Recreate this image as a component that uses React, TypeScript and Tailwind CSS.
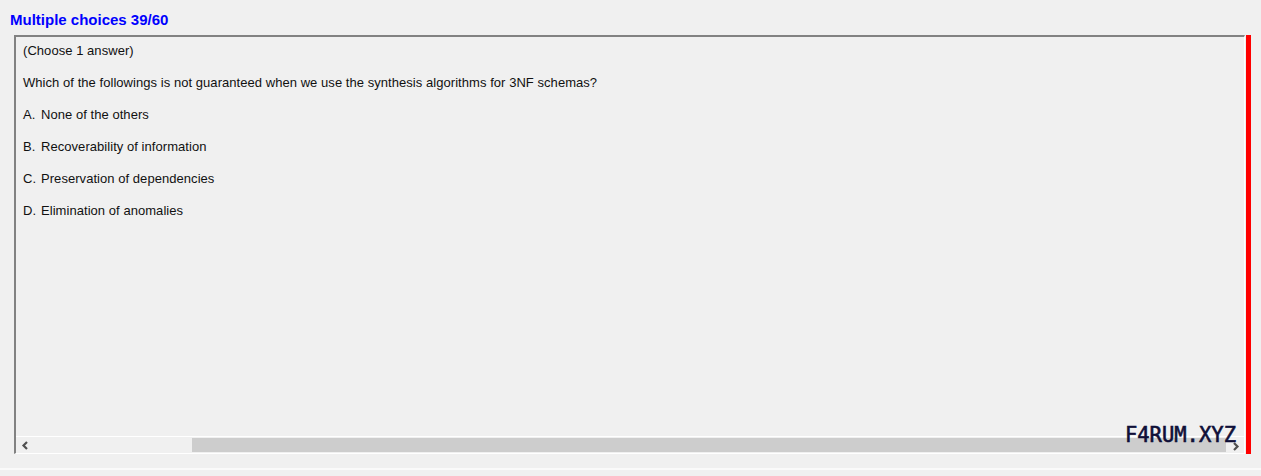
import React from 'react';

const options = [
    { key: 'A.', text: 'None of the others' },
    { key: 'B.', text: 'Recoverability of information' },
    { key: 'C.', text: 'Preservation of dependencies' },
    { key: 'D.', text: 'Elimination of anomalies' },
];

const Chevron = ({ dir }: { dir: 'left' | 'right' }) => (
    <svg width="8" height="9" viewBox="0 0 8 9" className="block">
        {dir === 'left' ? (
            <polyline points="6,1 2.5,4.5 6,8" fill="none" stroke="#505050" strokeWidth="2.2" />
        ) : (
            <polyline points="2,1 5.5,4.5 2,8" fill="none" stroke="#505050" strokeWidth="2.2" />
        )}
    </svg>
);

const App = () => {
    return (
        <div className="w-[1261px] h-[476px] bg-[#f0f0f0] overflow-hidden font-['Liberation_Sans',Arial,sans-serif] text-black">
            <div className="pl-[10px] pt-[11px] h-[35px]">
                <h1 className="text-[15px] leading-[18px] font-bold text-[#0000ff]">Multiple choices 39/60</h1>
            </div>

            <div className="flex pl-[14px] h-[419px]">
                {/* question panel */}
                <div className="relative flex flex-col w-[1231px] border-t-2 border-l-2 border-t-[#828282] border-l-[#828282] border-r border-b border-r-white border-b-white">
                    <div className="flex-1 flex flex-col gap-4 pl-[7px] pt-[6px] text-[13px] leading-[16px] tracking-[0.05px] text-[#111]">
                        <p>(Choose 1 answer)</p>
                        <p>Which of the followings is not guaranteed when we use the synthesis algorithms for 3NF schemas?</p>
                        {options.map((o) => (
                            <p key={o.key}>
                                <span className="inline-block w-[18px]">{o.key}</span>
                                {o.text}
                            </p>
                        ))}
                    </div>

                    {/* horizontal scrollbar */}
                    <div className="flex items-center h-[17px] border-t border-white bg-[#f0f0f0]">
                        <div className="w-[16px] flex justify-center pl-[2px]">
                            <Chevron dir="left" />
                        </div>
                        <div className="flex-1 h-full py-[1px] pl-[160px] pr-[2px]">
                            <div className="h-full bg-[#cdcdcd]"></div>
                        </div>
                        <div className="w-[16px] flex justify-center pt-[2px]">
                            <Chevron dir="right" />
                        </div>
                    </div>

                    <span className="absolute right-[8px] bottom-[8px] font-['DejaVu_Sans_Mono',monospace] font-normal text-[20.5px] leading-[20px] text-[#0f0f38] [-webkit-text-stroke:0.6px_#0f0f38]">
                        F4RUM.XYZ
                    </span>
                </div>

                <div className="ml-[1px] w-[5px] bg-[#ff0000]"></div>
            </div>

            <div className="mt-[14px] border-t-2 border-[#fafafa]"></div>
        </div>
    );
};

export default App;
